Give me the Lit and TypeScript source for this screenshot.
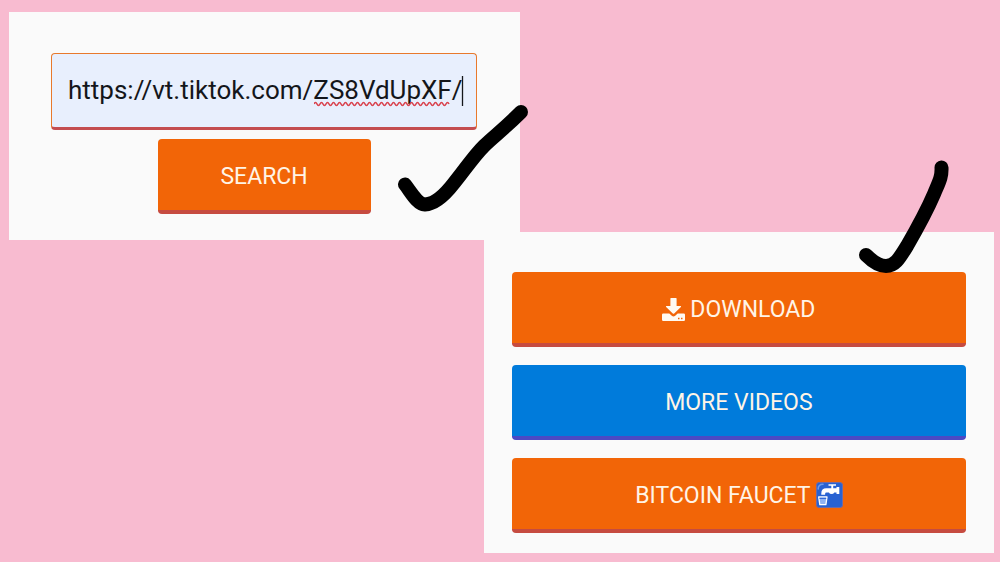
import { LitElement, html, css } from "lit";
import { customElement, state } from "lit/decorators.js";

@customElement("app-root")
export class AppRoot extends LitElement {
  @state() private url = "https://vt.tiktok.com/ZS8VdUpXF/";

  static styles = css`
    :host {
      display: block;
      min-height: 100vh;
      box-sizing: border-box;
      background: #f8bbd0;
      font-family: Roboto, "Noto Sans", sans-serif;
    }
    * {
      box-sizing: border-box;
    }
    .page {
      display: flex;
      flex-direction: column;
      padding: 12px 6px 8px 9px;
    }
    .panel {
      position: relative;
      display: flex;
      flex-direction: column;
      background: #fafafa;
    }
    .search {
      width: calc(52% - 1px);
      padding: 41px 43px 26px 42px;
      gap: 9px;
      align-items: center;
    }
    .actions {
      align-self: flex-end;
      width: calc(52% - 2px);
      margin-top: -8px;
      padding: 40px 28px 20px;
      gap: 18px;
    }
    .field {
      position: relative;
      width: 100%;
    }
    .url {
      display: block;
      width: 100%;
      height: 77px;
      padding: 0 8px 2px 16px;
      border: 1px solid #e8792c;
      border-bottom: 3px solid #c44d50;
      border-radius: 4px;
      background: #e8effd;
      color: #14161a;
      font: 400 26px/32px Roboto, "Noto Sans", sans-serif;
      outline: none;
    }
    .marks {
      position: absolute;
      left: 263px;
      top: 20px;
      pointer-events: none;
    }
    .btn {
      display: flex;
      align-items: center;
      justify-content: center;
      gap: 5px;
      width: 100%;
      height: 75px;
      padding: 5px 0 0;
      border: 0;
      border-bottom: 4px solid #c64b40;
      border-radius: 4px;
      background: #f26507;
      color: #fff4e6;
      font: 400 23px/28px Roboto, "Noto Sans", sans-serif;
      text-transform: uppercase;
      cursor: pointer;
    }
    .half {
      width: 50%;
    }
    .blue {
      background: #007bdb;
      border-bottom-color: #4b49c4;
    }
    .icon {
      margin-bottom: 2px;
    }
    .tick {
      position: absolute;
      overflow: visible;
      pointer-events: none;
      fill: none;
      stroke: #000;
      stroke-width: 14;
      stroke-linecap: round;
      stroke-linejoin: round;
    }
    .tick-search {
      left: 389px;
      top: 93px;
    }
    .tick-actions {
      right: 45px;
      top: -72px;
    }
  `;

  private onInput(e: Event) {
    this.url = (e.target as HTMLInputElement).value;
  }

  render() {
    return html`
      <main class="page">
        <form class="panel search" @submit=${(e: Event) => e.preventDefault()}>
          <div class="field">
            <input class="url" type="text" aria-label="Video link" spellcheck="false"
              .value=${this.url} @input=${this.onInput} />
            <svg class="marks" width="150" height="36" viewBox="0 0 150 36" fill="none" aria-hidden="true">
              <path d="M0 31 q1.5 -3 3 0 t3 0 t3 0 t3 0 t3 0 t3 0 t3 0 t3 0 t3 0 t3 0 t3 0 t3 0 t3 0 t3 0 t3 0 t3 0 t3 0 t3 0 t3 0 t3 0 t3 0 t3 0 t3 0 t3 0 t3 0 t3 0 t3 0 t3 0 t3 0 t3 0 t3 0 t3 0 t3 0 t3 0 t3 0 t3 0 t3 0 t3 0 t3 0 t3 0 t3 0 t3 0 t3 0 t3 0 t3 0"
                stroke="#d9424d" stroke-width="1.6" />
              <path d="M148.500 3V33" stroke="#14161a" stroke-width="1.3" />
            </svg>
          </div>
          <button class="btn half" type="submit">Search</button>
          <svg class="tick tick-search" width="130" height="106" viewBox="0 0 130 106" aria-hidden="true">
            <path d="M7 79.500C13 87 19 99 27 99.500C36 99 46 91 56 78C66 66 75 52 86 41C95 32 105 25 123 7" />
          </svg>
        </form>

        <section class="panel actions">
          <button class="btn" type="button">
            <svg class="icon" width="23" height="23" viewBox="0 0 23 23" fill="#fffaf2" aria-hidden="true">
              <path d="M9 0h5q.6 0 .6.600V8h4q.8.300.300.900l-6.700 6.500q-.7.600-1.400 0L4.100 8.900Q3.600 8.300 4.400 8h4V.6Q8.400 0 9 0Z" />
              <path fill-rule="evenodd" d="M1.200 15.500h6.100l2.500 2.300q1.700 1.400 3.400 0l2.500-2.300h6.100q1.200 0 1.200 1.200v5q0 1.300-1.200 1.300H1.200Q0 23 0 21.700v-5q0-1.200 1.200-1.200ZM16 19.700v1.500h1.500v-1.500ZM19 19.700v1.500h1.500v-1.500Z" />
            </svg>
            <span>Download</span>
          </button>
          <button class="btn blue" type="button">More videos</button>
          <button class="btn" type="button">
            <span>Bitcoin faucet</span>
            <svg class="icon" width="27" height="26" viewBox="0 0 27 26" aria-hidden="true">
              <rect x=".5" y=".5" width="26" height="25" rx="2.500" fill="#2862d2" stroke="#6f6aa5" />
              <path d="M2.200 7Q2.200 2.200 7 2.200" fill="none" stroke="#6f9aea" stroke-width="1.500" stroke-linecap="round" />
              <path d="M12.500 2.200h7.500v1.600h-2.800v2.500h3.300V5h2.800v7h-2.800v-1.500h-2.200q-.8 1.600-2.700 1.600t-2.700-1.600H10.500q-1.400 0-1.400 1.400v.8H5.300v-1.500q0-4.900 5-4.900h5V3.800h-2.800Z" fill="#fff" />
              <path d="M2.700 15h8.300l-1.100 7.700H3.800Z" fill="#8fb2f2" stroke="#fff" stroke-width="1.300" stroke-linejoin="round" />
              <path d="M3.500 16.300h6.700" stroke="#2862d2" stroke-width="1.200" />
            </svg>
          </button>
          <svg class="tick tick-actions" width="90" height="112" viewBox="0 0 90 112" aria-hidden="true">
            <path d="M7 95C13 101 19 106 27 106C36 106 40 99 48 86C59 67 69 48 75 34C80 22 83 17 82.500 7.500" />
          </svg>
        </section>
      </main>
    `;
  }
}
